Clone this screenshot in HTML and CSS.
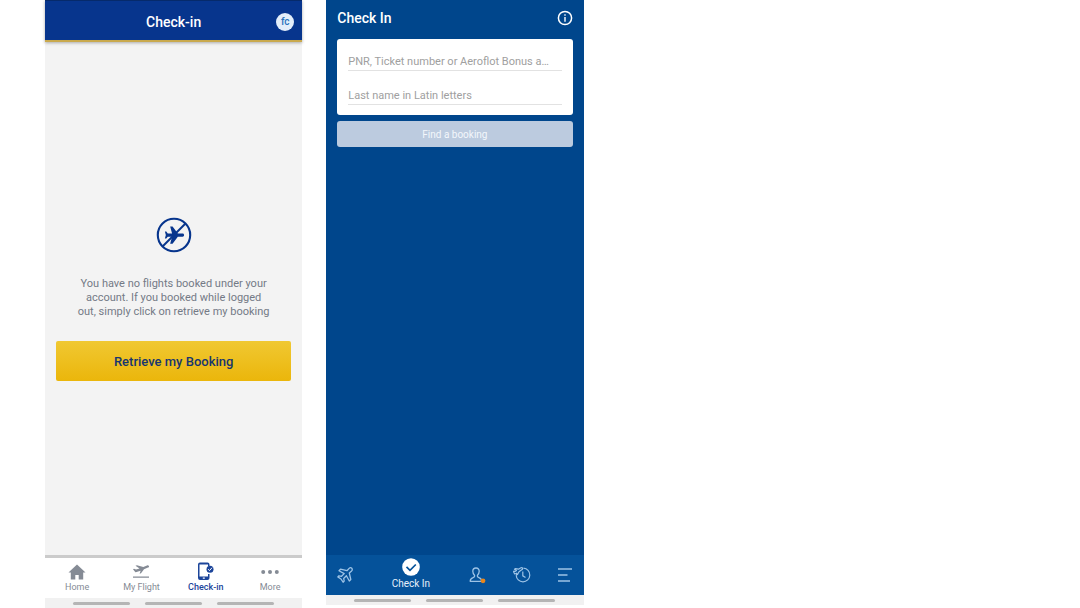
FILE: index.html
```html
<!DOCTYPE html>
<html lang="en">
<head>
<meta charset="utf-8">
<meta name="viewport" content="width=device-width, initial-scale=1">
<title>Check-in</title>
<link rel="stylesheet" href="styles.css">
</head>
<body>
<div class="board">
  <section class="phone phone-light">
    <header class="bar">
      <h1 class="bar-title">Check-in</h1>
      <button class="avatar" type="button" aria-label="Profile">fc</button>
    </header>
    <main class="empty">
      <svg class="empty-icon" viewBox="0 0 36 36" aria-hidden="true">
        <circle cx="18" cy="18" r="16.2" fill="none" stroke="#07358d" stroke-width="2.100"/>
        <path transform="translate(30 7) rotate(90) scale(.96)" fill="#07358d" d="M20.500 16.500v-2.500L13.200 8.500V3.500c0-.83-.67-1.500-1.700-1.500S9.800 2.670 9.800 3.500V8.500l-7.300 5.500v2.500l7.300-2V19l-2 1.500V22l3.700-1 3.700 1v-1.500L13.200 19v-4.500z"/>
        <path d="M6.500 29.500 29.500 6.500" stroke="#07358d" stroke-width="2"/>
      </svg>
      <p class="empty-text">You have no flights booked under your account. If you booked while logged out, simply click on retrieve my booking</p>
      <button class="retrieve" type="button">Retrieve my Booking</button>
    </main>
    <nav class="tabs">
      <a class="tab" href="#home">
        <svg class="tab-icon" viewBox="0 0 20 20" aria-hidden="true"><path fill="#858b95" d="M10 3.500 1.500 11.500h2.300V18.500h4.500v-4.500h3.400v4.500h4.500v-7h2.300z"/></svg>
        Home
      </a>
      <a class="tab" href="#flight">
        <svg class="tab-icon" viewBox="0 0 20 20" aria-hidden="true"><path fill="#858b95" d="M2 15.500h16v1.200H2zM18 5.200c-.3-.8-1.200-1-2-.7l-3.700 1.400L6 4.200l-1.500.6 4 2.600-3.500 1.200-2-.8-1 .4 2 2.500c.4.500 1 .6 1.600.400l4-1.300-1 2.900 1.400-.5 3-4L17 6.600c.8-.3 1.200-.8 1-1.400z"/></svg>
        My Flight
      </a>
      <a class="tab tab-on" href="#checkin">
        <svg class="tab-icon" viewBox="0 0 20 20" aria-hidden="true">
          <path fill="#1c459a" fill-rule="evenodd" d="M4 1.500h7.500a2 2 0 0 1 2 2V5H12V3.500H3.500v12H12V13h1.500v4a2 2 0 0 1-2 2H4a2 2 0 0 1-2-2V3.500a2 2 0 0 1 2-2zM6.800 16.600v1.200h2v-1.200z"/>
          <circle cx="14" cy="8.200" r="3.500" fill="#1c459a"/>
          <path d="m12.200 8.200 1.300 1.400 2.500-2.900" fill="none" stroke="#fff" stroke-width="1"/>
        </svg>
        Check-in
      </a>
      <a class="tab" href="#more">
        <svg class="tab-icon" viewBox="0 0 20 20" aria-hidden="true"><g fill="#858b95"><circle cx="3.200" cy="11" r="2"/><circle cx="10" cy="11" r="2"/><circle cx="16.800" cy="11" r="2"/></g></svg>
        More
      </a>
    </nav>
    <div class="gestures"><span class="pill"></span><span class="pill"></span><span class="pill"></span></div>
  </section>

  <section class="phone phone-blue">
    <header class="head">
      <h1 class="head-title">Check In</h1>
      <button class="info" type="button" aria-label="Information">
        <svg class="info-icon" viewBox="0 0 16 16" aria-hidden="true"><circle cx="8" cy="8" r="6.600" fill="none" stroke="#fff" stroke-width="1.500"/><path d="M8 7v4.800M8 4.300v1.500" stroke="#fff" stroke-width="1.400"/></svg>
      </button>
    </header>
    <form class="search">
      <div class="card">
        <input class="field" type="text" aria-label="Booking reference" placeholder="PNR, Ticket number or Aeroflot Bonus a…">
        <input class="field" type="text" aria-label="Last name" placeholder="Last name in Latin letters">
      </div>
      <button class="find" type="button">Find a booking</button>
    </form>
    <nav class="dock">
      <a class="dock-item" href="#flights" aria-label="Flights">
        <svg class="dock-icon" viewBox="0 0 18 18" aria-hidden="true"><path fill="none" stroke="#9dc3e6" stroke-width="1.300" stroke-linejoin="round" d="M15.800 2.200c-.8-.8-2-.5-2.700.2L11 4.700 4.500 3.200 3 4.700l5.200 2.900-2.700 2.700-2.600-.5-1.100 1.100 3.200 2.100 2.100 3.200 1.100-1.100-.5-2.600 2.700-2.700 2.900 5.200 1.500-1.500L13.300 7l2.300-2.100c.7-.7 1-1.900.2-2.700z"/></svg>
      </a>
      <a class="dock-item dock-on" href="#check-in">
        <svg class="dock-icon" viewBox="0 0 18 18" aria-hidden="true"><circle cx="9" cy="9" r="8.800" fill="#fff"/><path d="m4.500 8.800 3.500 3.500 5.800-5.800" fill="none" stroke="#05529a" stroke-width="1.700"/></svg>
        Check In
      </a>
      <a class="dock-item" href="#profile" aria-label="Profile">
        <svg class="dock-icon" viewBox="0 0 18 18" aria-hidden="true"><path fill="none" stroke="#9dc3e6" stroke-width="1.300" stroke-linejoin="round" d="M8 2C5.800 2 4.800 3.500 4.800 5.300c0 1.700.7 2.900 1.700 3.900.5 1-.3 2-1.500 2.500-1.800.7-2.800 1.300-2.800 3.600h11.600c0-2.300-1-2.900-2.800-3.600-1.200-.5-2-1.500-1.500-2.500 1-1 1.700-2.200 1.700-3.900C11.200 3.500 10.200 2 8 2z"/><circle cx="15" cy="14.800" r="2.400" fill="#e8861c"/></svg>
      </a>
      <a class="dock-item" href="#history" aria-label="History">
        <svg class="dock-icon" viewBox="0 0 18 18" aria-hidden="true"><g fill="none" stroke="#9dc3e6" stroke-width="1.200"><path d="M10.500 2.200a6.800 6.800 0 1 1-7.300 7M9.800 5.500v4.300l2.700 1.700"/><path stroke-linejoin="round" d="M9.500 2c-.5-.5-1.300-.3-2 .1l-2 1.100L2.500 2.600l-1 .7 2 1.200-1.500 1L.9 5.200l-.4.500L1.700 8l2-.8-.2 1.900 1-.6L6 5.800l2.700-2c.8-.5 1.200-1.300.8-1.800z"/></g></svg>
      </a>
      <a class="dock-item" href="#menu" aria-label="Menu">
        <svg class="dock-icon" viewBox="0 0 18 18" aria-hidden="true"><path d="M2 3h14M2 9h9.500M2 15h12" stroke="#9dc3e6" stroke-width="1.300"/></svg>
      </a>
    </nav>
    <div class="gestures"><span class="pill"></span><span class="pill"></span><span class="pill"></span></div>
  </section>
</div>
</body>
</html>
```
FILE: styles.css
```css
* { box-sizing: border-box; }

body {
  margin: 0;
  background: #fff;
  font-family: Roboto, "Liberation Sans", sans-serif;
}

button, input { font: inherit; border: 0; padding: 0; }
a { text-decoration: none; color: inherit; }
svg { display: block; }

.board {
  display: grid;
  grid-template-columns: 257fr 257fr 472fr;
  gap: 24px;
  min-height: 100vh;
  padding-left: 45px;
}

.phone { display: flex; flex-direction: column; min-width: 0; }
.phone-light { background: #f3f3f3; }
.phone-blue { background: #00468c; margin-bottom: 3px; }

.bar {
  display: grid;
  grid-template-columns: 1fr auto 1fr;
  align-items: center;
  height: 42px;
  padding: 2px 8px 0;
  background: #07358d;
  border-top: 1px solid #062a6b;
  border-bottom: 2px solid #c9a94d;
  box-shadow: 0 1px 3px #aaa;
}
.bar-title {
  grid-column: 2;
  margin: 0;
  color: #fff;
  font-size: 14px;
  font-weight: 500;
  line-height: 18px;
}
.avatar {
  justify-self: end;
  width: 18px;
  height: 18px;
  border-radius: 50%;
  background: #e3eefa;
  color: #2b74bd;
  font-size: 10px;
  font-weight: 500;
  line-height: 18px;
}

.empty {
  flex: 1;
  display: flex;
  flex-direction: column;
  align-items: center;
  justify-content: center;
  padding: 0 11px;
}
.empty-icon { width: 36px; height: 36px; }
.empty-text {
  max-width: 195px;
  margin: 24px 0 22px;
  color: #747a86;
  font-size: 11px;
  line-height: 14px;
  text-align: center;
}
.retrieve {
  width: 100%;
  height: 40px;
  padding-top: 2px;
  border-radius: 2px;
  background: linear-gradient(#f0c832, #ebb60b);
  color: #17366f;
  font-size: 13px;
  font-weight: 500;
}

.tabs {
  display: grid;
  grid-template-columns: repeat(4, 1fr);
  height: 43px;
  padding-top: 3px;
  border-top: 3px solid #cbcbcb;
  background: #fff;
}
.tab {
  display: flex;
  flex-direction: column;
  align-items: center;
  color: #858b95;
  font-size: 9px;
  line-height: 12px;
}
.tab-on { color: #1c459a; font-weight: 500; }
.tab-icon { width: 20px; height: 20px; }

.gestures {
  display: flex;
  justify-content: center;
  align-items: center;
  gap: 15px;
  height: 10px;
  background: #f1f1f1;
}
.pill { width: 57px; height: 3px; border-radius: 2px; background: #b5b5b5; }

.head {
  display: flex;
  align-items: center;
  justify-content: space-between;
  height: 39px;
  padding: 0 11px 3px;
}
.head-title {
  margin: 0;
  color: #fff;
  font-size: 14px;
  font-weight: 500;
  line-height: 18px;
}
.info { background: none; }
.info-icon { width: 16px; height: 16px; }

.search {
  flex: 1;
  display: flex;
  flex-direction: column;
  gap: 6px;
  padding: 0 11px;
}
.card {
  display: flex;
  flex-direction: column;
  gap: 14px;
  padding: 12px 11px 10px;
  border-radius: 3px;
  background: #fff;
}
.field {
  width: 100%;
  height: 20px;
  padding-top: 2px;
  border-bottom: 1px solid #e2e2e2;
  background: none;
  color: #333;
  font-size: 11px;
  text-overflow: ellipsis;
}
.field::placeholder { color: #a0a0a0; opacity: 1; }
.find {
  height: 26px;
  border-radius: 3px;
  background: #bccbdf;
  color: #f3f7fc;
  font-size: 10px;
}

.dock {
  display: grid;
  grid-template-columns: 38fr 93fr 40fr 49fr 37fr;
  height: 40px;
  background: #05529a;
}
.dock-item {
  display: flex;
  flex-direction: column;
  align-items: center;
  justify-content: center;
}
.dock-on {
  justify-content: flex-start;
  gap: 1px;
  padding-top: 3px;
  color: #e6f0fa;
  font-size: 10px;
  line-height: 13px;
}
.dock-icon { width: 18px; height: 18px; }
```
